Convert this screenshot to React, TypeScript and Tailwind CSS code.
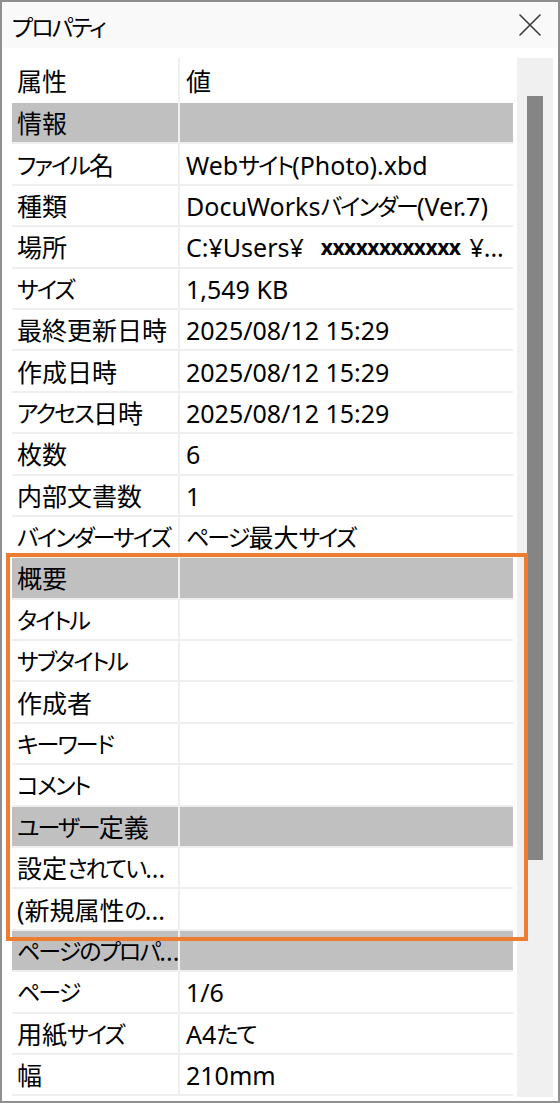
import React from 'react';

type Row = {
  label: string;
  value?: React.ReactNode;
  section?: boolean;
};

// kana in the original UI font are set much narrower than kanji, so tighten them
const Jp = ({ text }: { text: string }) => {
  const parts = text.split(/([\u3040-\u30ff]+)/).filter(Boolean);
  return (
    <>
      {parts.map((p, i) =>
        /[\u3040-\u30ff]/.test(p) ? (
          <span key={i} className="text-[23px] tracking-[-1.9px]">
            {p}
          </span>
        ) : (
          <span key={i}>{p}</span>
        ),
      )}
    </>
  );
};

const rows: Row[] = [
  { label: '情報', section: true },
  { label: 'ファイル名', value: <Jp text="Webサイト(Photo).xbd" /> },
  { label: '種類', value: <Jp text="DocuWorksバインダー(Ver.7)" /> },
  {
    label: '場所',
    value: (
      <span className="flex items-center whitespace-nowrap">
        <span>C:¥Users¥</span>
        <span className="ml-[17px] text-[21px] font-bold tracking-[-0.5px]">xxxxxxxxxxxx</span>
        <span className="ml-[9px]">¥...</span>
      </span>
    ),
  },
  { label: 'サイズ', value: '1,549 KB' },
  { label: '最終更新日時', value: '2025/08/12 15:29' },
  { label: '作成日時', value: '2025/08/12 15:29' },
  { label: 'アクセス日時', value: '2025/08/12 15:29' },
  { label: '枚数', value: '6' },
  { label: '内部文書数', value: '1' },
  { label: 'バインダーサイズ', value: <Jp text="ページ最大サイズ" /> },
  { label: '概要', section: true },
  { label: 'タイトル' },
  { label: 'サブタイトル' },
  { label: '作成者' },
  { label: 'キーワード' },
  { label: 'コメント' },
  { label: 'ユーザー定義', section: true },
  { label: '設定されてい...' },
  { label: '(新規属性の...' },
  { label: 'ページのプロパ...', section: true },
  { label: 'ページ', value: <Jp text="1/6" /> },
  { label: '用紙サイズ', value: <Jp text="A4たて" /> },
  { label: '幅', value: '210mm' },
];

const CloseIcon = () => (
  <svg width="22" height="22" viewBox="0 0 22 22" fill="none">
    <path d="M1 1 L21 21 M21 1 L1 21" stroke="#3a3a3a" strokeWidth="1.6" strokeLinecap="round" />
  </svg>
);

const PropertyRow = ({ row }: { row: Row }) => {
  const cellBg = row.section ? 'bg-[#c0c0c0]' : 'bg-white';
  return (
    <div className="flex h-[41.4px] shrink-0 gap-[2px] bg-[#efefef] pb-[2px]">
      <div className={`flex w-[166px] shrink-0 items-center overflow-hidden whitespace-nowrap pl-[5px] pt-[2px] ${cellBg}`}>
        <Jp text={row.label} />
      </div>
      <div className={`flex min-w-0 flex-1 items-center overflow-hidden whitespace-nowrap pl-[6px] pt-[2px] ${cellBg}`}>
        {row.value}
      </div>
    </div>
  );
};

export default function App() {
  return (
    <div
      className="relative flex h-[1103px] w-[560px] flex-col overflow-hidden border-2 border-[#8f8f8f] bg-white text-[25px] leading-none text-black [font-feature-settings:'palt']"
      style={{ fontFamily: '"Noto Sans", "Noto Sans CJK JP", sans-serif' }}
    >
      {/* title bar */}
      <div className="flex h-[46px] shrink-0 items-center justify-between bg-[#f9f9f9] pl-[10px] pr-[17px]">
        <span className="pt-[2px]">
          <Jp text="プロパティ" />
        </span>
        <CloseIcon />
      </div>

      {/* body */}
      <div className="flex min-h-0 flex-1 pl-[10px] pr-[5px] pt-[10px]">
        <div className="flex w-[501px] shrink-0 flex-col overflow-hidden">
          <div className="flex h-[45px] shrink-0 gap-[2px] bg-[#efefef]">
            <div className="flex w-[166px] shrink-0 items-center bg-white pl-[5px] pt-[2px]">属性</div>
            <div className="flex flex-1 items-center bg-white pl-[6px] pt-[2px]">値</div>
          </div>
          {rows.map((row, i) => (
            <PropertyRow key={i} row={row} />
          ))}
        </div>

        {/* scrollbar */}
        <div className="ml-[4px] flex h-[1039px] w-[36px] shrink-0 justify-center bg-[#f0f0f0] pt-[38px]">
          <div className="h-[764px] w-[16px] bg-[#858585]" />
        </div>
      </div>

      {/* highlight annotation */}
      <div className="pointer-events-none absolute left-[4px] top-[551px] h-[388px] w-[522px] border-4 border-[#ed7d31]" />
    </div>
  );
}
